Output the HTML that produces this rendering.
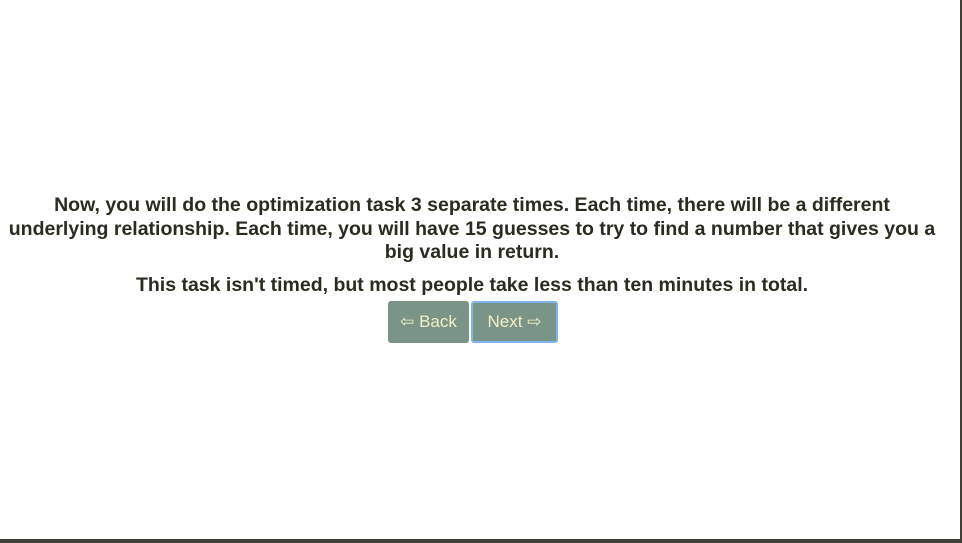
<!DOCTYPE html>
<html><head><style>
html,body{margin:0;padding:0;}
body{width:962px;height:543px;position:relative;background:#fff;overflow:hidden;font-family:"Liberation Sans",sans-serif;}
.rb{position:absolute;right:0;top:0;width:2px;height:543px;background:#3f3f35;}
.bb{position:absolute;left:0;bottom:0;width:962px;height:4px;background:#3f3f35;}
.txt{position:absolute;left:0;width:944px;text-align:center;color:#2b2b20;font-weight:bold;font-size:19.5px;white-space:nowrap;}
.btn{position:absolute;top:301px;height:42px;background:#7a9488;color:#f5efc4;font-size:17px;line-height:42px;text-align:center;border-radius:3px;box-sizing:border-box;}
</style></head><body>
<div class="txt" style="top:194px;line-height:23.5px;">Now, you will do the optimization task 3 separate times. Each time, there will be a different<br>underlying relationship. Each time, you will have 15 guesses to try to find a number that gives you a<br>big value in return.</div>
<div class="txt" style="top:273px;line-height:24px;">This task isn't timed, but most people take less than ten minutes in total.</div>
<div class="btn" style="left:388px;width:81px;">⇦ Back</div>
<div class="btn" style="left:471px;width:87px;border:2px solid #80b4f0;line-height:38px;">Next ⇨</div>
<div class="rb"></div><div class="bb"></div>
</body></html>
